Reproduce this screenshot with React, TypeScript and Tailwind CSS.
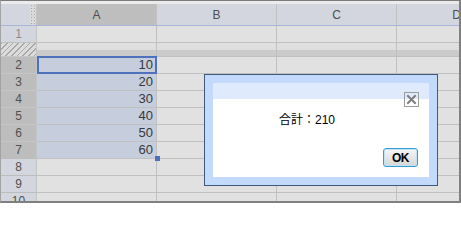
import React from "react";

const COLS = ["A", "B", "C", "D"];
const rows: { n: number; v?: string; sel: boolean }[] = [
  { n: 2, v: "10", sel: true },
  { n: 3, v: "20", sel: true },
  { n: 4, v: "30", sel: true },
  { n: 5, v: "40", sel: true },
  { n: 6, v: "50", sel: true },
  { n: 7, v: "60", sel: true },
  { n: 8, sel: false },
  { n: 9, sel: false },
  { n: 10, sel: false },
];

export default function App() {
  return (
    <div className="relative w-[461px] h-[203px] overflow-hidden font-['Liberation_Sans','Noto_Sans_CJK_JP',sans-serif]">
      <div className="h-full overflow-hidden border-t border-t-[#7b7b7b] border-l border-l-[#a3a3a3] border-r-2 border-r-[#808080] border-b-2 border-b-[#808080] bg-[#e1e1e1]">
        <div className="h-[3px] bg-[#ebebeb]" />
        {/* column header */}
        <div className="flex h-[22px] border-b border-b-[#a6b5d8]">
          <div className="flex w-[36px] shrink-0 border-r border-r-[#c4c4c4]">
            <div className="w-[29px] bg-[#d3d6de]" />
            <div className="w-[6px] bg-[#dadada] bg-[radial-gradient(#a8a8a8_0.8px,transparent_0.9px)] bg-[length:3px_3px]" />
          </div>
          {COLS.map((c) => (
            <div
              key={c}
              className={`flex w-[120px] shrink-0 items-center justify-center border-r border-r-[#c2c2c2] text-[12px] text-[#4e4e4e] ${
                c === "A" ? "bg-[#bebebe]" : "bg-[#d3d6de]"
              }`}
            >
              {c}
            </div>
          ))}
        </div>
        {/* row 1 */}
        <div className="flex h-[17px] border-b border-b-[#c0c0c0]">
          <div className="flex w-[36px] shrink-0 items-center justify-center border-r border-r-[#c4c4c4] bg-[#d3d6de] text-[12px] text-[#8e8e8e]">
            1
          </div>
          {COLS.map((c) => (
            <div key={c} className="w-[120px] shrink-0 border-r border-r-[#c0c0c0]" />
          ))}
        </div>
        {/* frozen splitter */}
        <div className="flex h-[13px]">
          <div className="w-[36px] shrink-0 border-r border-r-[#c4c4c4] bg-[repeating-linear-gradient(135deg,#a9a9a9_0px,#a9a9a9_1px,#dcdcdc_1px,#dcdcdc_4px)]" />
          {COLS.map((c) => (
            <div
              key={c}
              className="w-[120px] shrink-0 border-r border-r-[#c0c0c0] bg-[linear-gradient(#dfdfdf_0%,#dfdfdf_50%,#cbcbcb_58%,#cbcbcb_100%)]"
            />
          ))}
        </div>
        {/* rows */}
        {rows.map((r) => (
          <div key={r.n} className="flex h-[17px]">
            <div
              className={`flex w-[36px] shrink-0 items-center justify-center border-t border-r border-r-[#c4c4c4] text-[12px] leading-[16px] text-[#505050] ${
                r.sel ? "bg-[#bdbdbd] border-t-[#c6c6c6]" : "bg-[#d3d6de] border-t-[#bcbcbc]"
              }`}
            >
              {r.n}
            </div>
            {COLS.map((c) => {
              const isA = c === "A";
              const sel = isA && r.sel;
              return (
                <div
                  key={c}
                  className={`relative flex w-[120px] shrink-0 items-center justify-end border-t border-t-[#c0c0c0] border-r border-r-[#c0c0c0] pr-[3px] text-[13px] leading-[16px] text-[#383838] ${
                    sel ? "bg-[#c6cddc]" : ""
                  }`}
                >
                  {isA && r.v}
                  {isA && r.n === 2 && (
                    <div className="absolute -top-px left-0 -right-px -bottom-px z-10 border-2 border-[#4f70bb]" />
                  )}
                  {isA && r.n === 7 && (
                    <div className="absolute left-[118px] top-[14px] z-10 h-[5px] w-[5px] bg-[#4d6fbe]" />
                  )}
                </div>
              );
            })}
          </div>
        ))}
      </div>

      {/* dialog */}
      <div className="absolute left-[204px] top-[74px] z-20 h-[112px] w-[234px] border border-[#3d5a7e] bg-[#c4dafd] p-[8px]">
        <div className="relative flex h-full flex-col bg-white">
          <div className="h-[16px] shrink-0 bg-[#dfeafd]" />
          <div className="flex flex-1 flex-col">
            <div className="pl-[66px] pt-[14px] text-[12px] leading-[14px] text-black">合計：210</div>
            <div className="mt-auto flex justify-end pb-[10px] pr-[11px]">
              <button className="flex h-[19px] w-[35px] items-center justify-center rounded-[3px] border border-[#3a9cd6] bg-[linear-gradient(#f6f6f6,#e6e6e6_50%,#d6d6d6)] text-[12px] font-bold leading-none tracking-[-0.5px] text-black shadow-[inset_0_0_0_1px_#bfe3f6]">
                OK
              </button>
            </div>
          </div>
          <div className="absolute right-[10px] top-[9px] h-[15px] w-[15px] border border-[#9c9c9c]">
            <svg width="13" height="13" viewBox="0 0 13 13" className="block">
              <path d="M3 3 L10 10 M10 3 L3 10" stroke="#7d7d7d" strokeWidth="2" strokeLinecap="square" />
            </svg>
          </div>
        </div>
      </div>
    </div>
  );
}
